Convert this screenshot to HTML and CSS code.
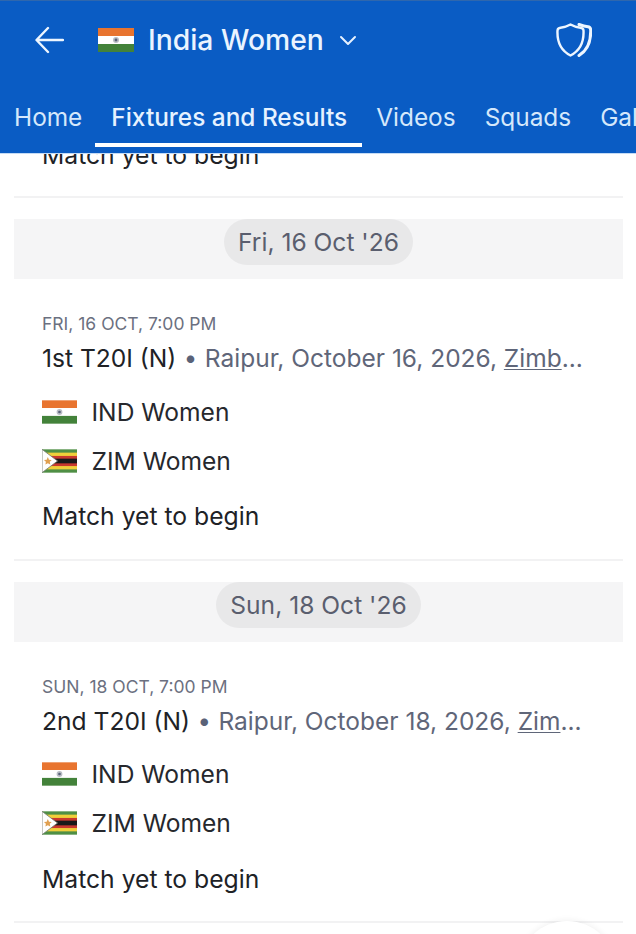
FILE: index.html
```html
<!DOCTYPE html>
<html lang="en">
<head>
<meta charset="utf-8">
<title>India Women</title>
<link rel="stylesheet" href="styles.css">
</head>
<body>
<svg class="defs" width="0" height="0" aria-hidden="true">
  <defs>
    <symbol id="flag-ind" viewBox="0 0 36 24">
      <rect width="36" height="8" fill="#e8742f"/>
      <rect y="8" width="36" height="8" fill="#fff"/>
      <rect y="16" width="36" height="8" fill="#43823a"/>
      <circle cx="18" cy="12" r="3" fill="#b9bdc4"/>
      <circle cx="18" cy="12" r="1.4" fill="#59627a"/>
    </symbol>
    <symbol id="flag-zim" viewBox="0 0 36 24">
      <rect width="36" height="24" fill="#4f8f45"/>
      <rect y="3.4" width="36" height="17.2" fill="#f0cf3a"/>
      <rect y="6.8" width="36" height="10.4" fill="#c8382e"/>
      <rect y="9.6" width="36" height="4.8" fill="#1a1a1a"/>
      <path d="M0 0 L16 12 L0 24 Z" fill="#fff" stroke="#6f7568" stroke-width="0.8"/>
      <path d="M6 8 l1.2 2.6 2.8.3-2 1.9.5 2.800-2.500-1.400-2.500 1.400.5-2.800-2-1.900 2.800-.3 Z" fill="#e0a050"/>
    </symbol>
  </defs>
</svg>
<div class="page">
  <header class="header">
    <div class="topbar">
      <svg class="back" viewBox="0 0 30 28" aria-hidden="true"><path d="M29 14 H3 M14 2 L2.500 14 L14 26" fill="none" stroke="#eef6ff" stroke-width="2.400" stroke-linecap="round" stroke-linejoin="round"/></svg>
      <svg class="flag-top" aria-hidden="true"><use href="#flag-ind"/></svg>
      <span class="team-title">India Women</span>
      <svg class="chevron" viewBox="0 0 18 11" aria-hidden="true"><path d="M2 2 L9 9 L16 2" fill="none" stroke="#e6f1ff" stroke-width="2" stroke-linecap="round" stroke-linejoin="round"/></svg>
      <svg class="shield" viewBox="0 0 36 34" aria-hidden="true">
        <path d="M23 1.500 C26 2.600 29 3.500 32 3.800 C34 4 34.600 5 34.700 7 C35 18 32 27 23 32.500" fill="none" stroke="#eef6ff" stroke-width="3" stroke-linecap="round" stroke-linejoin="round"/>
        <path d="M14.500 1.500 C17.500 3.200 21 4.300 24.500 4.700 C26.500 4.900 27.400 5.800 27.500 7.500 C28 18 24.500 27.500 14.500 32.500 C4.500 27.500 1 18 1.500 7.500 C1.600 5.800 2.500 4.900 4.500 4.700 C8 4.300 11.500 3.200 14.500 1.500 Z" fill="#0a5cc4" stroke="#eef6ff" stroke-width="2.400" stroke-linejoin="round"/>
      </svg>
    </div>
    <nav class="tabs">
      <span class="tab">Home</span>
      <span class="tab tab-active">Fixtures and Results</span>
      <span class="tab">Videos</span>
      <span class="tab">Squads</span>
      <span class="tab">Gallery</span>
    </nav>
  </header>
  <main class="feed">
    <div class="card card-partial"><p class="status">Match yet to begin</p></div>
    <section class="day">
      <div class="day-band"><span class="day-pill">Fri, 16 Oct '26</span></div>
      <article class="card">
        <p class="when">FRI, 16 OCT, 7:00 PM</p>
        <p class="title"><span class="match">1st T20I (N)</span><span class="dot">•</span><span class="venue">Raipur, October 16, 2026, <u>Zimb</u>...</span></p>
        <div class="team"><svg class="flag" aria-hidden="true"><use href="#flag-ind"/></svg><span>IND Women</span></div>
        <div class="team"><svg class="flag" aria-hidden="true"><use href="#flag-zim"/></svg><span>ZIM Women</span></div>
        <p class="status">Match yet to begin</p>
      </article>
    </section>
    <section class="day">
      <div class="day-band"><span class="day-pill">Sun, 18 Oct '26</span></div>
      <article class="card">
        <p class="when">SUN, 18 OCT, 7:00 PM</p>
        <p class="title"><span class="match">2nd T20I (N)</span><span class="dot">•</span><span class="venue">Raipur, October 18, 2026, <u>Zim</u>...</span></p>
        <div class="team"><svg class="flag" aria-hidden="true"><use href="#flag-ind"/></svg><span>IND Women</span></div>
        <div class="team"><svg class="flag" aria-hidden="true"><use href="#flag-zim"/></svg><span>ZIM Women</span></div>
        <p class="status">Match yet to begin</p>
      </article>
    </section>
  </main>
  <div class="fab-shadow"></div>
</div>
</body>
</html>
```

FILE: styles.css
```css
* { box-sizing: border-box; }
html, body { margin: 0; padding: 0; background: #fff; }
body { font-family: Inter, "Liberation Sans", sans-serif; color: #1d1f24; }
p { margin: 0; }
.defs { display: block; height: 0; }
.page { position: relative; width: 636px; height: 934px; overflow: hidden; background: #fff; }

.header { position: relative; z-index: 2; height: 153px; background: #0a5cc4; border-top: 1px solid #2f67ad; box-shadow: 0 1px 0 #c4dbf5; }
.topbar { display: flex; align-items: center; height: 78px; padding-left: 34px; }
.back { width: 30px; height: 28px; margin-right: 34px; }
.flag-top { width: 36px; height: 24px; margin-right: 14px; }
.team-title { font-size: 28.300px; font-weight: 500; color: #eaf4ff; }
.chevron { width: 18px; height: 11px; margin-left: 15px; }
.shield { width: 36px; height: 34px; margin-left: auto; margin-right: 44px; }

.tabs { display: flex; height: 74px; padding-left: 14px; gap: 29px; overflow: hidden; padding-top: 22px; }
.tab { position: relative; font-size: 24.400px; line-height: 32px; color: #d5e8fb; white-space: nowrap; }
.tab-active { color: #e6f2ff; font-weight: 500; }
.tab-active::after { content: ""; position: absolute; left: -16px; right: -15px; top: 42px; height: 4px; background: #fff; }

.feed { padding: 0 13px 0 14px; }
.card { padding: 34px 28px 26.500px; border-bottom: 2px solid #f2f2f3; }
.card-partial { margin-top: -14px; padding-top: 0; height: 59px; padding-bottom: 0; }
.status { font-size: 24.700px; line-height: 32px; color: #202226; }
.day { margin-top: 21px; }
.day-band { display: flex; justify-content: center; align-items: flex-start; height: 60px; background: #f5f5f6; }
.day-pill { height: 46px; padding: 0 14px; border-radius: 23px; background: #e8e8e9; font-size: 24.600px; line-height: 46px; color: #5a5e6e; }
.when { font-size: 17.500px; line-height: 22px; color: #6b7080; }
.title { display: flex; font-size: 24.600px; line-height: 32px; margin-top: 7px; white-space: nowrap; }
.match { color: #202226; }
.dot { width: 28.500px; text-align: center; color: #5a6278; font-size: 24px; }
.venue { color: #5f6679; font-size: 24.500px; }
.venue u { text-decoration-thickness: 1px; text-underline-offset: 2px; }
.team { display: flex; align-items: center; height: 49px; font-size: 24.600px; color: #26282d; }
.team:first-of-type { margin-top: 13px; }
.flag { width: 35px; height: 24px; margin-right: 14.500px; }
.card .status { margin-top: 15px; }
.card-partial .status { margin-top: 0; }
.fab-shadow { position: absolute; left: 517px; top: 921px; width: 100px; height: 100px; border-radius: 50%; background: #fff; box-shadow: 0 -1px 6px rgba(0,0,0,.06); }
```
